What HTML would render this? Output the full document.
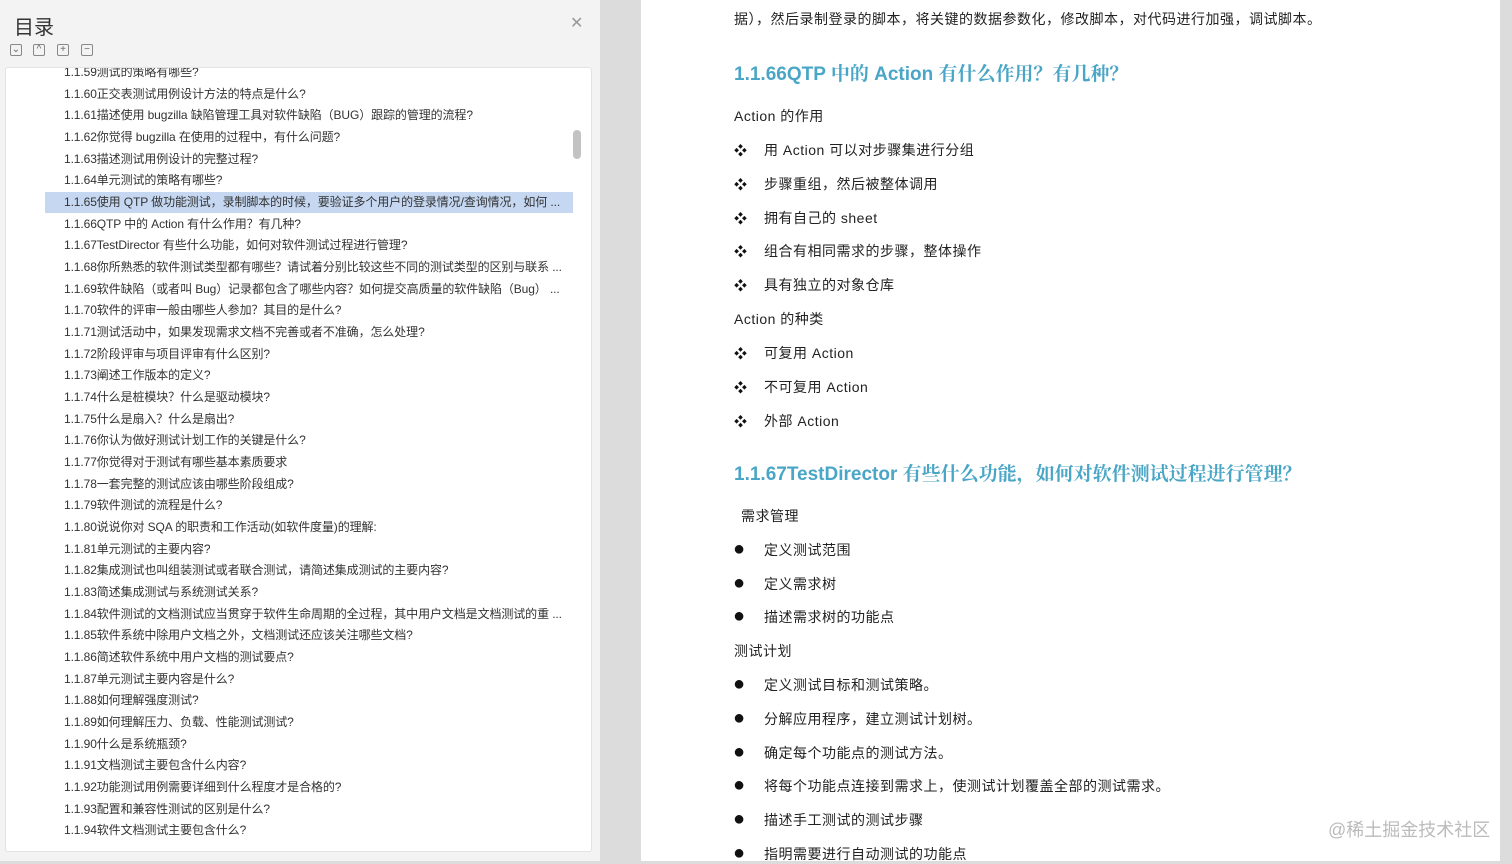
<!DOCTYPE html>
<html><head><meta charset="utf-8"><style>
body{margin:0;width:1512px;height:861px;overflow:hidden;background:#dcdcdc;font-family:"Liberation Sans","Noto Sans CJK SC",sans-serif;position:relative}
#left{position:absolute;left:0;top:0;width:600px;height:861px;background:#f3f3f3}
#title{position:absolute;left:14px;top:11px;font-size:20px;color:#333}
#close{position:absolute;left:570px;top:13px;font-size:16px;color:#999}
.btn{position:absolute;top:44px;width:12px;height:12px;border:1px solid #888;border-radius:2px;font-size:10px;line-height:10px;text-align:center;color:#666;box-sizing:border-box}
#list{position:absolute;left:5px;top:67px;width:585px;height:783px;background:#fff;border:1px solid #e3e3e3;border-radius:3px;overflow:hidden}
.it{position:absolute;left:58px;font-size:12px;color:#333;white-space:nowrap;line-height:20px;letter-spacing:-0.1px}
#hl{position:absolute;left:39px;top:124px;width:528px;height:21px;background:#c5d7f1}
#thumb{position:absolute;left:567px;top:62px;width:8px;height:29px;background:#c3c3c3;border-radius:4px}
#page{position:absolute;left:641px;top:0;width:859px;height:861px;background:#fff}
.p{position:absolute;font-size:14px;color:#222;white-space:nowrap;letter-spacing:0.5px}
.h{position:absolute;left:93px;font-size:19px;color:#4aa6c6;font-weight:bold;white-space:nowrap;font-family:"Liberation Sans","Noto Serif CJK SC",serif}
.b{position:absolute;left:93px;font-size:13px;color:#111}
.d{position:absolute;left:92px;font-size:20px;line-height:20px;color:#111}
#wm{position:absolute;left:1328px;top:816px;font-size:18px;color:#bbb}
</style></head><body>
<div id="left">
<div id="title">目录</div><div id="close">✕</div>
<div class="btn" style="left:10px">⌄</div><div class="btn" style="left:33px">^</div><div class="btn" style="left:57px">+</div><div class="btn" style="left:81px">−</div>
<div id="list">
<div id="hl"></div><div id="thumb"></div>
<div class="it" style="top:-6px">1.1.59测试的策略有哪些?</div>
<div class="it" style="top:16px">1.1.60正交表测试用例设计方法的特点是什么?</div>
<div class="it" style="top:37px">1.1.61描述使用 bugzilla 缺陷管理工具对软件缺陷（BUG）跟踪的管理的流程?</div>
<div class="it" style="top:59px">1.1.62你觉得 bugzilla 在使用的过程中，有什么问题?</div>
<div class="it" style="top:81px">1.1.63描述测试用例设计的完整过程?</div>
<div class="it" style="top:102px">1.1.64单元测试的策略有哪些?</div>
<div class="it" style="top:124px">1.1.65使用 QTP 做功能测试，录制脚本的时候，要验证多个用户的登录情况/查询情况，如何 ...</div>
<div class="it" style="top:146px">1.1.66QTP 中的 Action 有什么作用？有几种?</div>
<div class="it" style="top:167px">1.1.67TestDirector 有些什么功能，如何对软件测试过程进行管理?</div>
<div class="it" style="top:189px">1.1.68你所熟悉的软件测试类型都有哪些？请试着分别比较这些不同的测试类型的区别与联系 ...</div>
<div class="it" style="top:211px">1.1.69软件缺陷（或者叫 Bug）记录都包含了哪些内容？如何提交高质量的软件缺陷（Bug） ...</div>
<div class="it" style="top:232px">1.1.70软件的评审一般由哪些人参加？其目的是什么?</div>
<div class="it" style="top:254px">1.1.71测试活动中，如果发现需求文档不完善或者不准确，怎么处理?</div>
<div class="it" style="top:276px">1.1.72阶段评审与项目评审有什么区别?</div>
<div class="it" style="top:297px">1.1.73阐述工作版本的定义?</div>
<div class="it" style="top:319px">1.1.74什么是桩模块？什么是驱动模块?</div>
<div class="it" style="top:341px">1.1.75什么是扇入？什么是扇出?</div>
<div class="it" style="top:362px">1.1.76你认为做好测试计划工作的关键是什么?</div>
<div class="it" style="top:384px">1.1.77你觉得对于测试有哪些基本素质要求</div>
<div class="it" style="top:406px">1.1.78一套完整的测试应该由哪些阶段组成?</div>
<div class="it" style="top:427px">1.1.79软件测试的流程是什么?</div>
<div class="it" style="top:449px">1.1.80说说你对 SQA 的职责和工作活动(如软件度量)的理解:</div>
<div class="it" style="top:471px">1.1.81单元测试的主要内容?</div>
<div class="it" style="top:492px">1.1.82集成测试也叫组装测试或者联合测试，请简述集成测试的主要内容?</div>
<div class="it" style="top:514px">1.1.83简述集成测试与系统测试关系?</div>
<div class="it" style="top:536px">1.1.84软件测试的文档测试应当贯穿于软件生命周期的全过程，其中用户文档是文档测试的重 ...</div>
<div class="it" style="top:557px">1.1.85软件系统中除用户文档之外，文档测试还应该关注哪些文档?</div>
<div class="it" style="top:579px">1.1.86简述软件系统中用户文档的测试要点?</div>
<div class="it" style="top:601px">1.1.87单元测试主要内容是什么?</div>
<div class="it" style="top:622px">1.1.88如何理解强度测试?</div>
<div class="it" style="top:644px">1.1.89如何理解压力、负载、性能测试测试?</div>
<div class="it" style="top:666px">1.1.90什么是系统瓶颈?</div>
<div class="it" style="top:687px">1.1.91文档测试主要包含什么内容?</div>
<div class="it" style="top:709px">1.1.92功能测试用例需要详细到什么程度才是合格的?</div>
<div class="it" style="top:731px">1.1.93配置和兼容性测试的区别是什么?</div>
<div class="it" style="top:752px">1.1.94软件文档测试主要包含什么?</div>
</div></div>
<div id="page">
<div class="p" style="left:93px;top:9px">据），然后录制登录的脚本，将关键的数据参数化，修改脚本，对代码进行加强，调试脚本。</div>
<div class="h" style="top:59px">1.1.66QTP 中的 Action 有什么作用？有几种？</div>
<div class="p" style="left:93px;top:106px">Action 的作用</div>
<div class="b" style="top:140px">❖</div><div class="p" style="left:123px;top:140px">用 Action 可以对步骤集进行分组</div>
<div class="b" style="top:174px">❖</div><div class="p" style="left:123px;top:174px">步骤重组，然后被整体调用</div>
<div class="b" style="top:208px">❖</div><div class="p" style="left:123px;top:208px">拥有自己的 sheet</div>
<div class="b" style="top:241px">❖</div><div class="p" style="left:123px;top:241px">组合有相同需求的步骤，整体操作</div>
<div class="b" style="top:275px">❖</div><div class="p" style="left:123px;top:275px">具有独立的对象仓库</div>
<div class="p" style="left:93px;top:309px">Action 的种类</div>
<div class="b" style="top:343px">❖</div><div class="p" style="left:123px;top:343px">可复用 Action</div>
<div class="b" style="top:377px">❖</div><div class="p" style="left:123px;top:377px">不可复用 Action</div>
<div class="b" style="top:411px">❖</div><div class="p" style="left:123px;top:411px">外部 Action</div>
<div class="h" style="top:459px">1.1.67TestDirector 有些什么功能，如何对软件测试过程进行管理？</div>
<div class="p" style="left:100px;top:506px">需求管理</div>
<div class="d" style="top:539px">●</div><div class="p" style="left:123px;top:540px">定义测试范围</div>
<div class="d" style="top:573px">●</div><div class="p" style="left:123px;top:574px">定义需求树</div>
<div class="d" style="top:606px">●</div><div class="p" style="left:123px;top:607px">描述需求树的功能点</div>
<div class="p" style="left:93px;top:641px">测试计划</div>
<div class="d" style="top:674px">●</div><div class="p" style="left:123px;top:675px">定义测试目标和测试策略。</div>
<div class="d" style="top:708px">●</div><div class="p" style="left:123px;top:709px">分解应用程序，建立测试计划树。</div>
<div class="d" style="top:742px">●</div><div class="p" style="left:123px;top:743px">确定每个功能点的测试方法。</div>
<div class="d" style="top:775px">●</div><div class="p" style="left:123px;top:776px">将每个功能点连接到需求上，使测试计划覆盖全部的测试需求。</div>
<div class="d" style="top:809px">●</div><div class="p" style="left:123px;top:810px">描述手工测试的测试步骤</div>
<div class="d" style="top:843px">●</div><div class="p" style="left:123px;top:844px">指明需要进行自动测试的功能点</div>
</div>
<div id="wm">@稀土掘金技术社区</div>
</body></html>
